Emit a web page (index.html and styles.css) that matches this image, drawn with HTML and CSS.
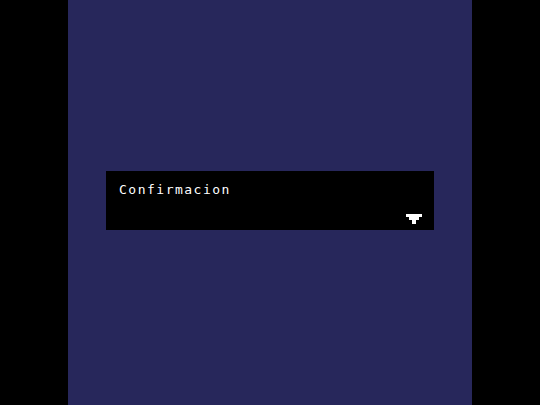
FILE: index.html
```html
<!DOCTYPE html>
<html>
<head>
<meta charset="utf-8">
<link rel="stylesheet" href="styles.css">
</head>
<body>
<div class="screen">
  <div class="dialog">
    <div class="message">Confirmacion</div>
    <svg class="arrow" width="16" height="10" viewBox="0 0 16 10" shape-rendering="crispEdges">
      <rect x="0" y="0" width="16" height="3" fill="#fff"/>
      <rect x="3" y="3" width="10" height="3" fill="#fff"/>
      <rect x="6" y="6" width="4" height="4" fill="#fff"/>
    </svg>
  </div>
</div>
</body>
</html>
```
FILE: styles.css
```css
html, body {
  margin: 0;
  padding: 0;
  background: #000;
  height: 100%;
}
body {
  display: flex;
  justify-content: center;
}
.screen {
  width: 404px;
  height: 405px;
  background: #27275b;
  display: flex;
  flex-direction: column;
  align-items: center;
  padding-top: 171px;
  box-sizing: border-box;
}
.dialog {
  width: 328px;
  height: 59px;
  box-sizing: border-box;
  background: #000;
  padding: 11px 12px 6px 13px;
  display: flex;
  flex-direction: column;
}
.message {
  color: #fff;
  font-family: "DejaVu Sans Mono", monospace;
  font-size: 13px;
  line-height: 16px;
  letter-spacing: 1.5px;
}
.arrow {
  display: block;
  margin-top: auto;
  align-self: flex-end;
}
```
